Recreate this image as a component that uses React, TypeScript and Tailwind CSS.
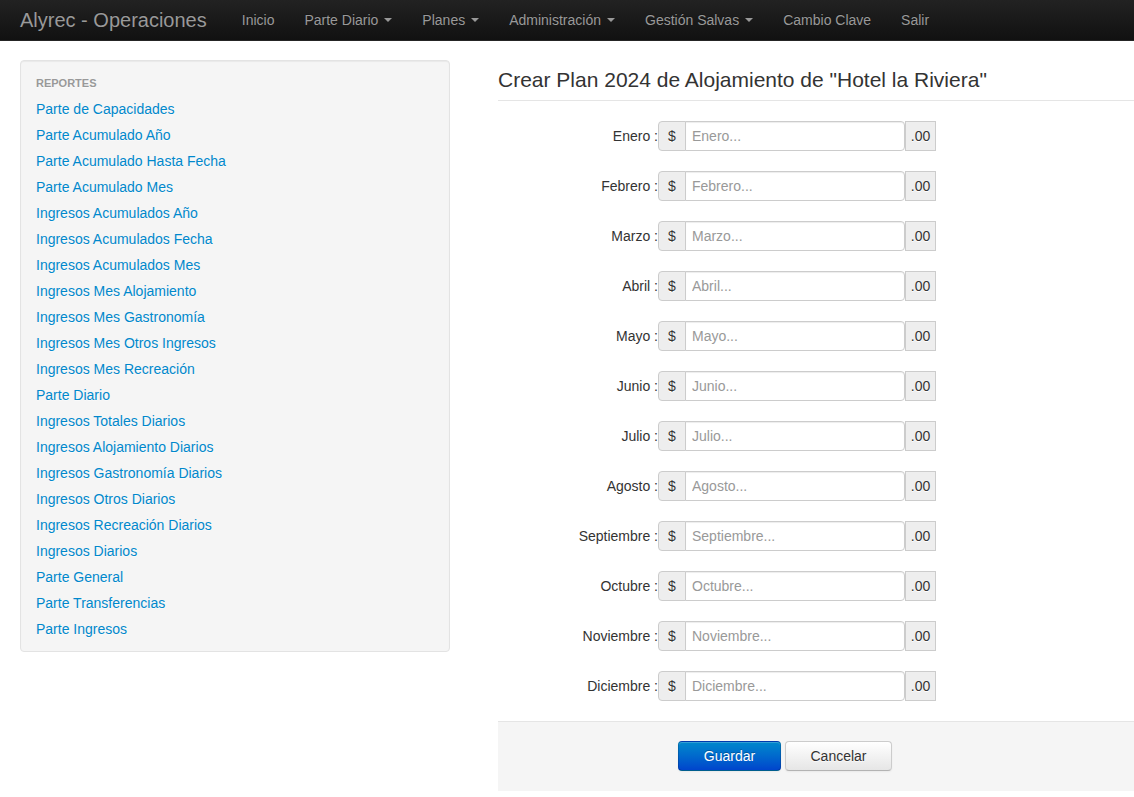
import React from 'react'

const NAV = [
  { label: 'Inicio', caret: false },
  { label: 'Parte Diario', caret: true },
  { label: 'Planes', caret: true },
  { label: 'Administración', caret: true },
  { label: 'Gestión Salvas', caret: true },
  { label: 'Cambio Clave', caret: false },
  { label: 'Salir', caret: false },
]

const REPORTES = [
  'Parte de Capacidades',
  'Parte Acumulado Año',
  'Parte Acumulado Hasta Fecha',
  'Parte Acumulado Mes',
  'Ingresos Acumulados Año',
  'Ingresos Acumulados Fecha',
  'Ingresos Acumulados Mes',
  'Ingresos Mes Alojamiento',
  'Ingresos Mes Gastronomía',
  'Ingresos Mes Otros Ingresos',
  'Ingresos Mes Recreación',
  'Parte Diario',
  'Ingresos Totales Diarios',
  'Ingresos Alojamiento Diarios',
  'Ingresos Gastronomía Diarios',
  'Ingresos Otros Diarios',
  'Ingresos Recreación Diarios',
  'Ingresos Diarios',
  'Parte General',
  'Parte Transferencias',
  'Parte Ingresos',
]

const MESES = [
  'Enero',
  'Febrero',
  'Marzo',
  'Abril',
  'Mayo',
  'Junio',
  'Julio',
  'Agosto',
  'Septiembre',
  'Octubre',
  'Noviembre',
  'Diciembre',
]

function Caret() {
  return (
    <span className="ml-[6px] mt-[8px] inline-block h-0 w-0 border-x-[4px] border-t-[4px] border-x-transparent border-t-[#999] align-top" />
  )
}

function Navbar() {
  return (
    <div className="h-[41px] border-b border-[#252525] bg-gradient-to-b from-[#222222] to-[#111111] [text-shadow:0_-1px_0_rgba(0,0,0,0.25)]">
      <div className="flex items-center pl-[20px]">
        <a className="block py-[10px] pr-[20px] text-[20px] leading-[20px] text-[#999]">Alyrec - Operaciones</a>
        <ul className="flex">
          {NAV.map((item) => (
            <li key={item.label}>
              <a className="block px-[15px] py-[10px] text-[14px] leading-[20px] text-[#999]">
                {item.label}
                {item.caret && <Caret />}
              </a>
            </li>
          ))}
        </ul>
      </div>
    </div>
  )
}

function Sidebar() {
  return (
    <div className="w-[430px] shrink-0 self-start rounded-[4px] border border-[#e3e3e3] bg-[#f5f5f5] py-[9px] shadow-[inset_0_1px_1px_rgba(0,0,0,0.05)]">
      <ul>
        <li className="px-[15px] py-[3px] text-[11px] font-bold uppercase leading-[20px] text-[#999] [text-shadow:0_1px_0_rgba(255,255,255,0.5)]">
          Reportes
        </li>
        {REPORTES.map((r) => (
          <li key={r}>
            <a className="block px-[15px] py-[3px] text-[14px] leading-[20px] text-[#0088cc] [text-shadow:0_1px_0_rgba(255,255,255,0.5)]">
              {r}
            </a>
          </li>
        ))}
      </ul>
    </div>
  )
}

function MesRow({ mes }: { mes: string }) {
  return (
    <div className="mb-[20px] flex items-start">
      <label className="w-[160px] shrink-0 pt-[5px] text-right text-[14px] leading-[20px] text-[#333]">{mes} :</label>
      <div className="flex">
        <span className="box-border h-[30px] w-[28px] rounded-l-[4px] border border-[#ccc] bg-[#eee] py-[4px] text-center text-[14px] leading-[20px] text-[#333] [text-shadow:0_1px_0_#fff]">
          $
        </span>
        <input
          placeholder={`${mes}...`}
          className="ml-[-1px] box-border h-[30px] w-[220px] rounded-r-[4px] border border-[#ccc] bg-white px-[6px] py-[4px] text-[14px] leading-[20px] text-[#555] shadow-[inset_0_1px_1px_rgba(0,0,0,0.075)] outline-none placeholder:text-[#999]"
        />
        <span className="box-border h-[30px] w-[31px] border border-[#ccc] bg-[#eee] py-[4px] text-center text-[14px] leading-[20px] text-[#333] [text-shadow:0_1px_0_#fff]">
          .00
        </span>
      </div>
    </div>
  )
}

export default function App() {
  return (
    <div className="min-h-screen bg-white font-['Liberation_Sans',Arial,sans-serif] text-[14px] text-[#333]">
      <Navbar />
      <div className="flex gap-[48px] pl-[20px] pt-[19px]">
        <Sidebar />
        <div className="min-w-0 flex-1">
          <form>
            <fieldset>
              <legend className="mb-[20px] block w-full border-b border-[#e5e5e5] text-[21px] leading-[40px] text-[#333]">
                Crear Plan 2024 de Alojamiento de "Hotel la Riviera"
              </legend>
              {MESES.map((m) => (
                <MesRow key={m} mes={m} />
              ))}
              <div className="flex gap-[4px] border-t border-[#e5e5e5] bg-[#f5f5f5] pb-[20px] pl-[180px] pt-[19px]">
                <button
                  type="button"
                  className="w-[103px] rounded-[4px] border border-[rgba(0,0,0,0.15)] border-b-[rgba(0,0,0,0.3)] bg-gradient-to-b from-[#0088cc] to-[#0044cc] py-[4px] text-[14px] leading-[20px] text-white shadow-[inset_0_1px_0_rgba(255,255,255,0.2),0_1px_2px_rgba(0,0,0,0.05)] [text-shadow:0_-1px_0_rgba(0,0,0,0.25)]"
                >
                  Guardar
                </button>
                <button
                  type="button"
                  className="w-[107px] rounded-[4px] border border-[#ccc] border-b-[#b3b3b3] bg-gradient-to-b from-white to-[#e6e6e6] py-[4px] text-[14px] leading-[20px] text-[#333] shadow-[inset_0_1px_0_rgba(255,255,255,0.2),0_1px_2px_rgba(0,0,0,0.05)] [text-shadow:0_1px_1px_rgba(255,255,255,0.75)]"
                >
                  Cancelar
                </button>
              </div>
            </fieldset>
          </form>
        </div>
      </div>
    </div>
  )
}
